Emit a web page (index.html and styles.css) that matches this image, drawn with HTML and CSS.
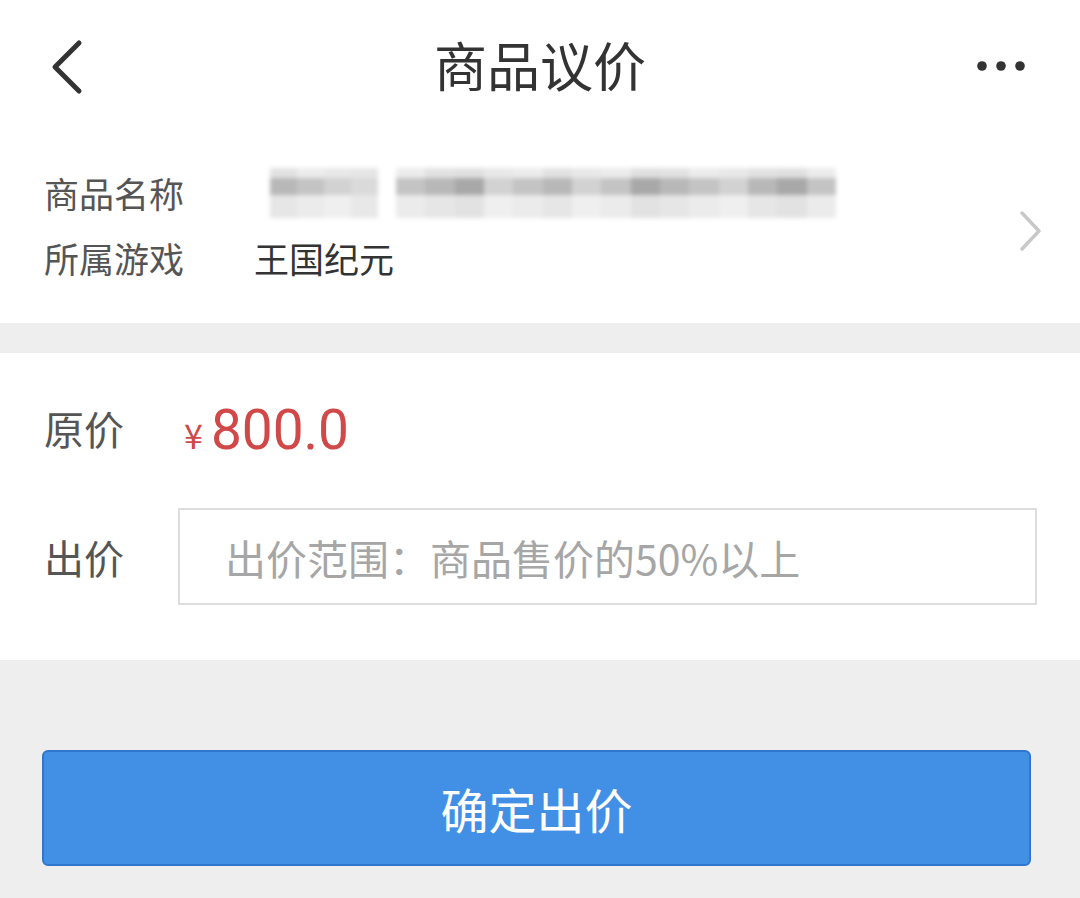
FILE: index.html
```html
<!DOCTYPE html>
<html lang="zh-CN">
<head>
<meta charset="utf-8">
<title>商品议价</title>
<link rel="stylesheet" href="styles.css">
</head>
<body>
<div class="page">
  <header class="topbar">
    <svg class="back" width="40" height="56" viewBox="0 0 40 56"><path d="M31 4 L7 28 L31 52" fill="none" stroke="#333" stroke-width="5" stroke-linecap="round" stroke-linejoin="round"/></svg>
    <h1 class="title">商品议价</h1>
    <svg class="more" width="56" height="14" viewBox="0 0 56 14"><circle cx="8" cy="7" r="4.8" fill="#333"/><circle cx="27" cy="7" r="4.8" fill="#333"/><circle cx="46" cy="7" r="4.8" fill="#333"/></svg>
  </header>

  <section class="info">
    <div class="info-rows">
      <div class="row">
        <span class="label">商品名称</span>
        <div class="blurred">
          <div class="grp first"><span class="px a"></span><span class="px b"></span><span class="px c"></span><span class="px e"></span></div>
          <div class="grp second"><span class="px b"></span><span class="px a"></span><span class="px d"></span><span class="px c"></span><span class="px b"></span><span class="px a"></span><span class="px c"></span><span class="px b"></span><span class="px d"></span><span class="px a"></span><span class="px b"></span><span class="px c"></span><span class="px a"></span><span class="px d"></span><span class="px b"></span></div>
        </div>
      </div>
      <div class="row">
        <span class="label">所属游戏</span>
        <span class="value">王国纪元</span>
      </div>
    </div>
    <svg class="chev" width="26" height="42" viewBox="0 0 26 42"><path d="M4 3 L21 21 L4 39" fill="none" stroke="#c8c8c8" stroke-width="3.5" stroke-linecap="round" stroke-linejoin="round"/></svg>
  </section>

  <section class="offer">
    <div class="price-row">
      <span class="label2">原价</span>
      <span class="price"><span class="yen">¥</span>800.0</span>
    </div>
    <div class="bid-row">
      <span class="label2">出价</span>
      <input class="bid-input" type="text" placeholder="出价范围：商品售价的50%以上">
    </div>
  </section>

  <div class="footer">
    <button class="confirm" type="button">确定出价</button>
  </div>
</div>
</body>
</html>
```

FILE: styles.css
```css
* { box-sizing: border-box; }
html, body { margin: 0; padding: 0; }
body {
  width: 1080px;
  height: 898px;
  overflow: hidden;
  background: #eeeeee;
  font-family: "Noto Sans CJK SC", "Noto Sans", sans-serif;
}
.page { display: flex; flex-direction: column; height: 898px; }

.topbar {
  height: 130px;
  background: #fff;
  display: flex;
  align-items: center;
  justify-content: space-between;
  padding: 0 50px 0 48px;
  position: relative;
}
.back { display: block; margin-top: 4px; }
.more { display: block; margin-top: 2px; }
.title {
  position: absolute;
  left: 0; right: 0;
  top: 32px;
  margin: 0;
  text-align: center;
  font-size: 53px;
  font-weight: 400;
  line-height: 64px;
  color: #333;
  pointer-events: none;
}

.info {
  background: #fff;
  height: 193px;
  padding: 30px 36px 0 44px;
  display: flex;
  align-items: flex-start;
  justify-content: space-between;
}
.info-rows { display: flex; flex-direction: column; }
.row { display: flex; align-items: center; height: 65px; }
.label {
  width: 210px;
  font-size: 35px;
  color: #555;
  line-height: 65px;
}
.value { font-size: 35px; color: #333; line-height: 65px; }
.blurred {
  display: flex;
  align-items: stretch;
  height: 50px;
  margin-left: 16px;
  gap: 18px;
  filter: blur(2px);
}
.grp { display: flex; }
.grp.first { width: 108px; }
.grp.second { width: 440px; }
.px { flex: 1; }
.px.a { background: linear-gradient(#e2e2e2 0 20%, #b8b8b8 20% 55%, #e6e6e6 55%); }
.px.b { background: linear-gradient(#ececec 0 20%, #c4c4c4 20% 55%, #ebebeb 55%); }
.px.c { background: linear-gradient(#e8e8e8 0 20%, #d2d2d2 20% 55%, #efefef 55%); }
.px.d { background: linear-gradient(#e0e0e0 0 20%, #a8a8a8 20% 55%, #e2e2e2 55%); }
.px.e { background: linear-gradient(#e6e6e6 0 20%, #dadada 20% 55%, #e8e8e8 55%); }
.chev { display: block; margin-top: 50px; }

.offer {
  margin-top: 30px;
  background: #fff;
  height: 307px;
  padding: 45px 43px 0 44px;
  display: flex;
  flex-direction: column;
}
.price-row { display: flex; align-items: center; height: 60px; }
.label2 {
  width: 134px;
  font-size: 40px;
  color: #555;
  flex: none;
}
.price {
  color: #d04848;
  font-family: Roboto, "Noto Sans", sans-serif;
  font-size: 55px;
  line-height: 60px;
  margin-left: 6px;
  padding-top: 8px;
}
.yen { font-size: 34px; margin-right: 8px; font-family: "Noto Sans CJK SC", sans-serif; }
.bid-row { display: flex; align-items: center; margin-top: 50px; }
.bid-input {
  flex: 1;
  height: 97px;
  border: 2px solid #dddddd;
  border-radius: 0;
  padding: 0 0 0 45px;
  font-family: "Noto Sans CJK SC", sans-serif;
  font-size: 41px;
  color: #333;
  background: #fff;
  outline: none;
}
.bid-input::placeholder { color: #a6a6a6; }

.footer { flex: 1; background: #eeeeee; padding: 90px 49px 0 42px; }
.confirm {
  display: block;
  width: 100%;
  height: 116px;
  background: #4290e6;
  border: 2px solid #2f76cc;
  border-radius: 6px;
  color: #fff;
  font-family: "Noto Sans CJK SC", sans-serif;
  font-size: 48px;
  padding: 0;
}
```
